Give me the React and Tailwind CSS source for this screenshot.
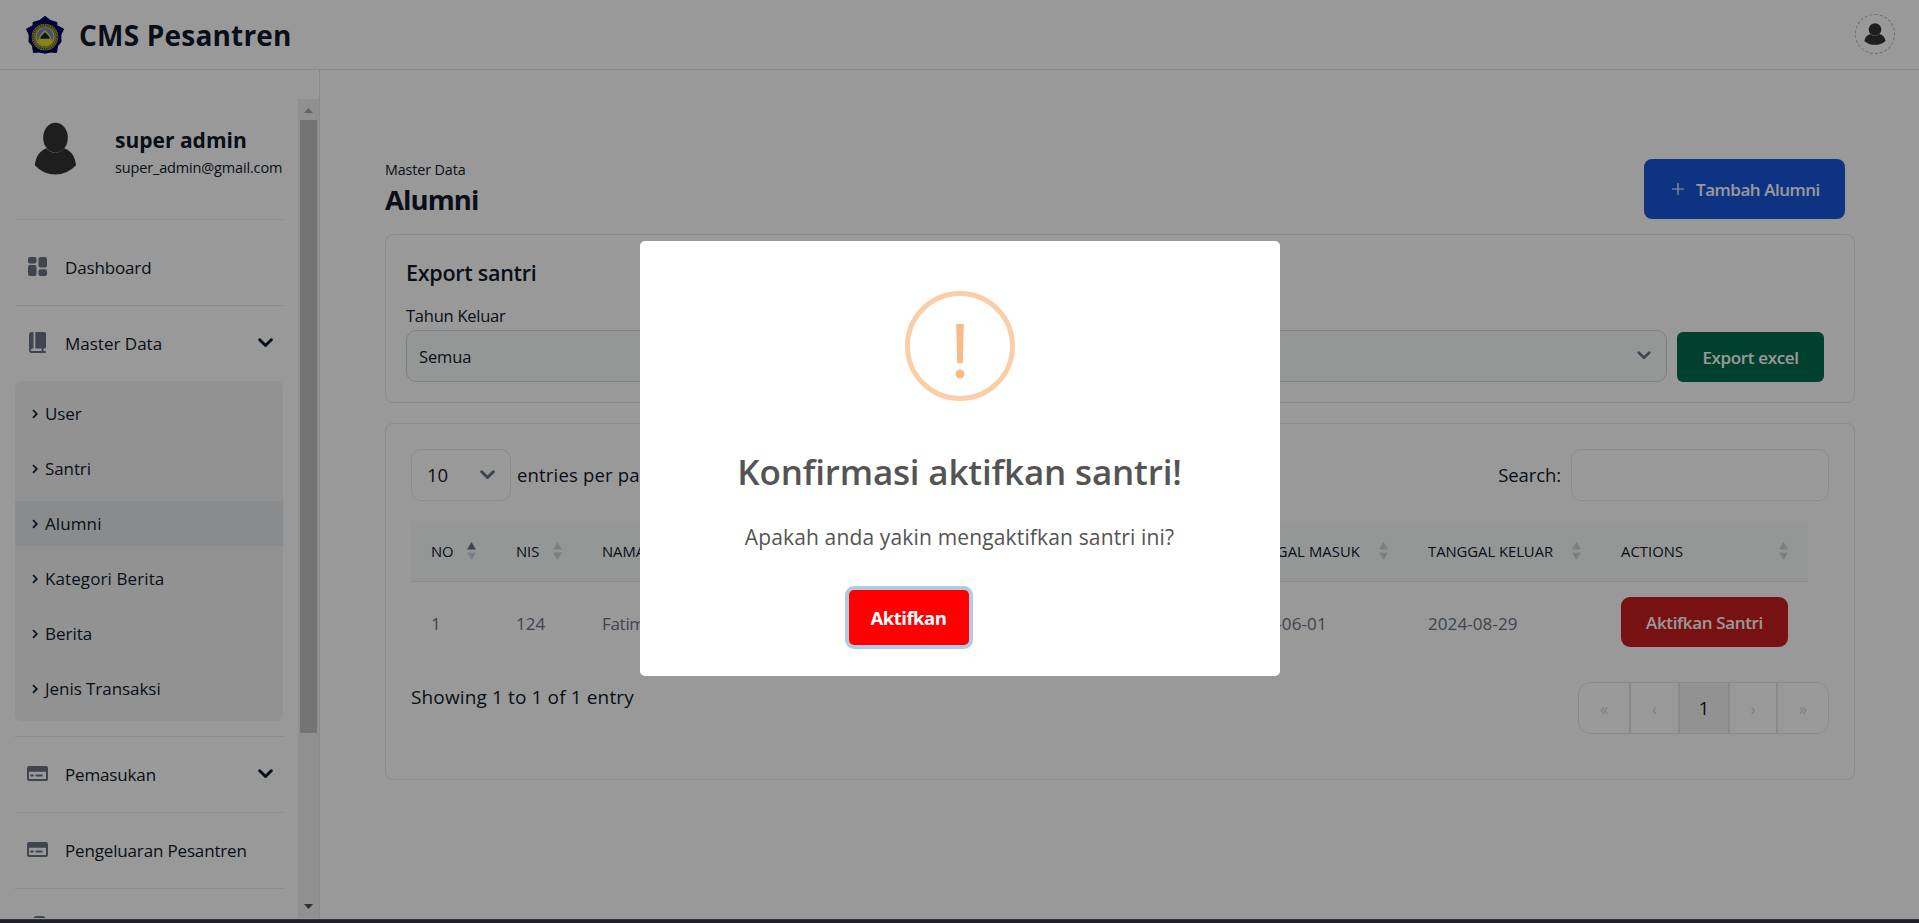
import React from "react";

function Logo() {
  return (
    <svg width="38" height="38" viewBox="0 0 38 38" className="shrink-0">
      <path d="M19 .3 24.500 4.500 31 6.500 30.800 9.500 37.500 13 34.800 19 35 26 31.500 30 30.500 36.500 25 36 19 37.200 13 36 7.500 36.500 6.500 30 3 26 3.200 19 .5 13 7.200 9.500 7 6.500 13.500 4.500Z" fill="#000058" stroke="#000058" strokeWidth="1" strokeLinejoin="round" />
      <circle cx="19" cy="21" r="13.300" fill="#b5b04a" />
      <circle cx="19" cy="21" r="12" fill="none" stroke="#4c4c3c" strokeWidth="1.800" strokeDasharray="1.500 .8" />
      <circle cx="19" cy="21" r="10.200" fill="#d8d820" stroke="#77771c" strokeWidth="1" />
      <circle cx="19" cy="20.500" r="8.400" fill="#7a7ad8" />
      <path d="M13.500 22c.5-4 3.500-4 5.500-7 2 3 5 3 5.500 7v1.500h-11Z" fill="#0a3030" stroke="#d8d840" strokeWidth="1.500" />
      <path d="M11.500 24q3.500-2.200 7.500 0 4-2.200 7.500 0-2 5-7.500 5t-7.500-5Z" fill="#e6dc2a" />
    </svg>
  );
}

function Person({ width, height }) {
  return (
    <svg width={width} height={height} viewBox="0 0 44 54" preserveAspectRatio="none" className="shrink-0">
      <path d="M.8 44C2 34 7 29 12.500 26.800Q21.500 36 31 26.800C37 29 42 34 43 44Q34 53.500 21.800 53.500T.8 44Z" fill="#333" />
      <ellipse cx="22" cy="16" rx="12.600" ry="15.300" fill="#333" />
    </svg>
  );
}

function Chevron({ className }) {
  return (
    <svg viewBox="0 0 15 10" className={className} fill="none" stroke="currentColor" strokeWidth="3" strokeLinecap="round" strokeLinejoin="round">
      <path d="m1.700 1.800 5.800 5.700 5.800-5.700" />
    </svg>
  );
}

function GridIcon() {
  return (
    <svg width="19" height="19" viewBox="0 0 19 19" fill="#6b7280">
      <rect width="8.500" height="6.500" rx="2" />
      <rect y="8" width="8.500" height="11" rx="2" />
      <rect x="10.500" width="8.500" height="10.500" rx="2" />
      <rect x="10.500" y="12.200" width="8.500" height="6.800" rx="2" />
    </svg>
  );
}

function BookIcon() {
  return (
    <svg width="17" height="21" viewBox="0 0 17 21" fill="#6b7280">
      <path d="M2.800 0H4.500V16.500H2.800A3 3 0 0 0 0 18.300V3A3 3 0 0 1 2.800 0Z" />
      <path d="M6.300 0H15.500A1.500 1.500 0 0 1 17 1.500V15A1.500 1.500 0 0 1 15.500 16.500H6.300Z" />
      <path d="M0 18V18.200A2.800 2.800 0 0 0 2.800 21H16.300A.7.7 0 0 0 17 20.300V19.800A.7.7 0 0 0 16.300 19.100H14.500V16H12.600V19.100H2.800A1.100 1.100 0 0 1 2.800 16.900V16H2Z" />
    </svg>
  );
}

function CardIcon() {
  return (
    <svg width="21" height="15" viewBox="0 0 21 15" className="shrink-0">
      <path fill="#6b7280" fillRule="evenodd" d="M2 0H19A2 2 0 0 1 21 2V13A2 2 0 0 1 19 15H2A2 2 0 0 1 0 13V2A2 2 0 0 1 2 0ZM2 5.800V13H19V5.800Z" />
      <path stroke="#6b7280" strokeWidth="1.800" strokeLinecap="round" d="M4 9.500h2M9.300 9.500h5.500" />
    </svg>
  );
}

function Sort({ active }) {
  return (
    <svg width="9" height="18" viewBox="0 0 9 18" className="shrink-0">
      <path d="M0 7.500 4.500 0 9 7.500Z" fill={active ? "#6b7280" : "#d1d3d7"} />
      <path d="M0 10.500H9L4.500 18Z" fill="#d1d3d7" />
    </svg>
  );
}

function MenuRow({ icon, label, tracking, chevron }) {
  return (
    <div className="flex h-[75px] items-center pl-3 pr-2.5">
      <span className="flex w-[21px] justify-center pb-0.5">{icon}</span>
      <span className={`ml-[17px] flex-1 text-[17px] font-medium leading-6 ${tracking}`}>{label}</span>
      {chevron && <Chevron className="mb-px h-2.5 w-[15px]" />}
    </div>
  );
}

const subItems = [
  ["User", "tracking-[-0.1px]"],
  ["Santri", "tracking-[-0.1px]"],
  ["Alumni", "tracking-[0.1px]"],
  ["Kategori Berita", "tracking-[0.1px]"],
  ["Berita", ""],
  ["Jenis Transaksi", "tracking-[-0.05px]"],
];

function Sidebar() {
  return (
    <aside className="flex w-80 shrink-0 border-r border-gray-200 pt-[29px]">
      <div className="h-[819px] w-[298px] overflow-hidden pl-[15px] pr-[15px]">
        <div className="flex h-[120px] items-start pl-[19px] pt-[23px]">
          <Person width="43" height="53" />
          <div className="ml-[38px] pt-1">
            <div className="text-[21px] font-bold leading-[28px]">super admin</div>
            <div className="pt-0.5 text-[14.5px] leading-6 tracking-[-0.16px]">super_admin@gmail.com</div>
          </div>
        </div>
        <div className="border-t border-gray-200 pt-2.5">
          <MenuRow icon={<GridIcon />} label="Dashboard" tracking="tracking-[-0.15px]" />
        </div>
        <div className="border-t border-gray-200 pb-[15px]">
          <MenuRow icon={<BookIcon />} label="Master Data" tracking="tracking-[0px]" chevron />
          <ul className="flex flex-col gap-2.5 rounded-md bg-gray-100 py-2.5">
            {subItems.map(([label, tracking]) => (
              <li key={label} className={`flex h-[45px] items-center pl-4 ${label === "Alumni" ? "bg-[#e6e8ea]" : ""}`}>
                <svg width="8" height="10" viewBox="0 0 8 10" fill="none" stroke="currentColor" strokeWidth="1.700">
                  <path d="m2 1 3.800 3.900L2 8.800" />
                </svg>
                <span className={`ml-1.5 pt-px text-[17px] font-medium leading-6 ${tracking}`}>{label}</span>
              </li>
            ))}
          </ul>
        </div>
        <div className="border-t border-gray-200">
          <MenuRow icon={<CardIcon />} label="Pemasukan" tracking="tracking-[-0.15px]" chevron />
        </div>
        <div className="border-t border-gray-200">
          <MenuRow icon={<CardIcon />} label="Pengeluaran Pesantren" tracking="tracking-[-0.16px]" />
        </div>
        <div className="border-t border-gray-200 pl-[18px] pt-[27px]">
          <div className="h-5 w-[13px] rounded bg-gray-500" />
        </div>
      </div>
      <div className="flex h-[819px] w-[21px] flex-col items-center bg-[#f1f1f1]">
        <svg width="9" height="21" viewBox="0 0 9 21" className="shrink-0"><path d="M0 14 4.500 9 9 14Z" fill="#a3a3a3" /></svg>
        <div className="h-[613px] w-[17px] bg-[#c1c1c1]" />
        <div className="flex-1" />
        <svg width="9" height="15" viewBox="0 0 9 15" className="shrink-0"><path d="M0 1H9L4.500 6Z" fill="#505050" /></svg>
      </div>
    </aside>
  );
}

function Th({ children, tracking = "tracking-[-0.06px]", active, width }) {
  return (
    <div className={`flex items-center justify-between px-5 ${width}`}>
      <span className={`text-[14.8px] font-medium ${tracking}`}>{children}</span>
      <Sort active={active} />
    </div>
  );
}

function Content() {
  return (
    <main className="flex-1 pl-[65px] pr-16 pt-[89px]">
      <div className="flex h-[60px] justify-between pr-2.5">
        <div>
          <div className="pt-px text-[14.3px] leading-5 tracking-[-0.1px]">Master Data</div>
          <h1 className="text-[27.500px] font-bold leading-[40px] tracking-[-0.9px]">Alumni</h1>
        </div>
        <button className="flex w-[201px] items-center rounded-lg bg-[#1a56db] pl-7 text-white">
          <svg width="12" height="12" viewBox="0 0 12 12" stroke="currentColor" strokeWidth="1.200" className="mb-px"><path d="M6 0v12M0 6h12" /></svg>
          <span className="ml-3 pt-0.5 text-[17px] font-semibold tracking-[-0.46px]">Tambah Alumni</span>
        </button>
      </div>

      <section className="mt-[15px] h-[169px] rounded-lg border border-gray-200 pl-5 pr-[30px] pt-[23px]">
        <h2 className="text-[21.500px] font-semibold leading-[30px] tracking-[-0.27px]">Export santri</h2>
        <div className="mt-4 text-[16.500px] leading-6 tracking-[-0.25px]">Tahun Keluar</div>
        <div className="mt-[2px] flex items-end gap-2.5">
          <div className="flex h-[52px] flex-1 items-center justify-between rounded-[10px] border border-gray-300 bg-gray-50 pl-3 pr-[15px]">
            <span className="pt-0.5 text-[16.500px] tracking-[-0.1px]">Semua</span>
            <Chevron className="mb-0.5 h-[9px] w-3.5 text-gray-500" />
          </div>
          <button className="h-[50px] w-[147px] rounded-md bg-[#046c4e] pt-0.5 text-[17px] font-semibold tracking-[-0.35px] text-white">Export excel</button>
        </div>
      </section>

      <section className="mt-5 h-[357px] rounded-lg border border-gray-200 pl-[25px] pr-[25px] pt-[25px]">
        <div className="flex h-[52px] items-center text-[18.500px]">
          <div className="flex h-full w-[100px] items-center justify-between rounded-[10px] border border-gray-200 pl-[15px] pr-[15px]">
            <span>10</span>
            <Chevron className="h-2.5 w-[15px] text-gray-500" />
          </div>
          <span className="ml-1.5 flex-1 tracking-[0.18px]">entries per page</span>
          <span className="tracking-[-0.1px]">Search:</span>
          <div className="ml-2.5 h-full w-[258px] rounded-[10px] border border-gray-200" />
        </div>

        <div className="mt-5 w-[1397px]">
          <div className="flex h-[61px] border-b border-gray-200 bg-gray-50">
            <Th width="w-[85px]" active>NO</Th>
            <Th width="w-[86px]">NIS</Th>
            <Th width="w-[635px]">NAMA</Th>
            <Th width="w-[191px]" tracking="tracking-[0.1px]">TANGGAL MASUK</Th>
            <Th width="w-[193px]" tracking="tracking-[-0.02px]">TANGGAL KELUAR</Th>
            <Th width="w-[207px]" tracking="tracking-[0.05px]">ACTIONS</Th>
          </div>
          <div className="flex h-20 items-center text-[17px] text-gray-500">
            <span className="w-[86px] pl-5 pt-[3px]">1</span>
            <span className="w-[85px] pl-[19px] pt-[3px]">124</span>
            <span className="w-[635px] pl-5 pt-[3px] tracking-[-0.3px]">Fatimah</span>
            <span className="w-[191px] pl-5 pt-[3px] tracking-[0.1px]">2024-06-01</span>
            <span className="w-[192px] pl-5 pt-[3px] tracking-[0.08px]">2024-08-29</span>
            <button className="ml-[21px] h-[50px] w-[167px] rounded-[9px] bg-[#c81e1e] pt-0.5 text-[17px] font-semibold tracking-[-0.35px] text-white">Aktifkan Santri</button>
          </div>
        </div>

        <div className="mt-5 flex items-start justify-between">
          <span className="text-[19px] leading-[30px] tracking-[0.13px]">Showing 1 to 1 of 1 entry</span>
          <div className="flex h-[52px] w-[251px] overflow-hidden rounded-xl border border-gray-200 text-[17px] text-[#d1d5db]">
            <span className="flex w-[52px] items-center justify-center border-r-2 border-gray-200 pt-px">«</span>
            <span className="flex w-[49px] items-center justify-center border-r-2 border-gray-200 pt-px">‹</span>
            <span className="flex w-[50px] items-center justify-center border-r-2 border-gray-200 bg-gray-100 pt-px text-[19px] font-medium text-gray-900">1</span>
            <span className="flex w-12 items-center justify-center border-r-2 border-gray-200 pt-px">›</span>
            <span className="flex w-[50px] items-center justify-center pt-px">»</span>
          </div>
        </div>
      </section>
    </main>
  );
}

function Dialog() {
  return (
    <div className="absolute inset-x-0 top-0 flex h-[919px] justify-center bg-black/40 pt-[241px]">
      <div className="flex h-[435px] w-[640px] flex-col items-center rounded-[5px] bg-white pt-[50px] text-[#545454]">
        <svg width="110" height="110" viewBox="0 0 110 110" className="shrink-0">
          <circle cx="55" cy="55" r="52.500" fill="none" stroke="#facea8" strokeWidth="5" />
          <path d="M51.200 33h7.600l-1 39h-5.600Z" fill="#f8bb86" />
          <circle cx="55" cy="83" r="4.500" fill="#f8bb86" />
        </svg>
        <h2 className="mt-[46px] text-[35px] font-semibold leading-[50px] tracking-[-0.18px]">Konfirmasi aktifkan santri!</h2>
        <p className="mt-6 text-[21px] leading-[32px] tracking-[0.15px]">Apakah anda yakin mengaktifkan santri ini?</p>
        <button className="mr-[102px] mt-[37px] h-[55px] w-[120px] rounded-[5px] bg-[#ff0000] text-[18.500px] font-bold tracking-[-0.5px] text-white shadow-[0_0_0_4px_#b1cae3]">Aktifkan</button>
      </div>
    </div>
  );
}

export default function App() {
  return (
    <div className="relative flex h-[923px] w-full flex-col overflow-hidden whitespace-nowrap bg-white font-['Open_Sans','Noto_Sans',sans-serif] text-gray-900">
      <header className="flex h-[70px] shrink-0 items-center border-b border-gray-200 pl-[26px] pr-6">
        <Logo />
        <span className="ml-[15px] flex-1 pt-px text-[28px] font-bold tracking-[0.2px]">CMS Pesantren</span>
        <span className="mb-px flex h-10 w-10 items-center justify-center rounded-full border border-dashed border-[#b8b8b8]">
          <Person width="22" height="22" />
        </span>
      </header>
      <div className="flex h-[849px] shrink-0">
        <Sidebar />
        <Content />
      </div>
      <div className="h-1 shrink-0 border-t border-[#303038] bg-[#1e1e2d]" />
      <Dialog />
    </div>
  );
}
